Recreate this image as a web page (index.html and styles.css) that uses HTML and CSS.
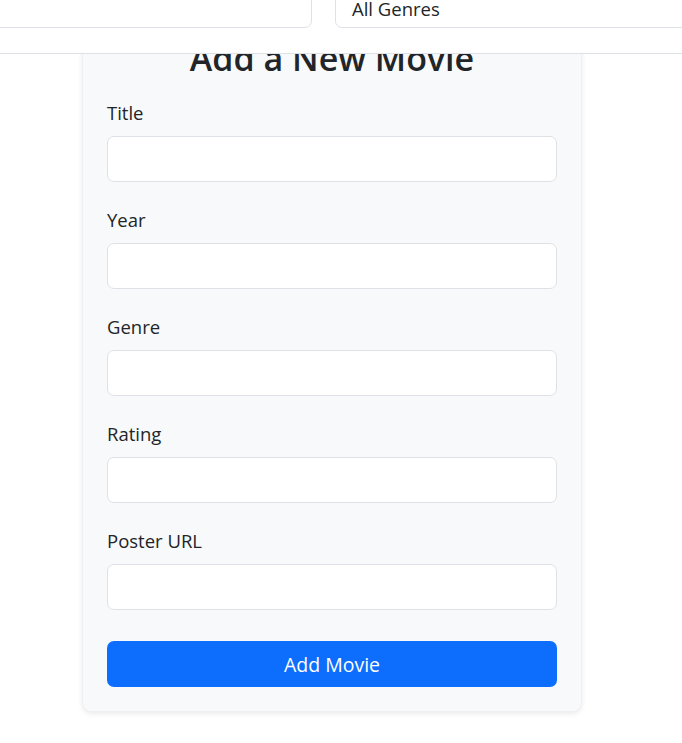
FILE: index.html
```html
<!DOCTYPE html>
<html lang="en">
<head>
<meta charset="utf-8">
<title>Add a New Movie</title>
<link rel="stylesheet" href="styles.css">
</head>
<body>
<header class="topbar">
  <div class="filters">
    <input class="field field-search" type="text" aria-label="Search">
    <div class="field field-select">All Genres</div>
  </div>
</header>
<main class="page">
  <section class="card">
    <h2 class="card-title">Add a New Movie</h2>
    <form class="movie-form">
      <div class="group">
        <label class="label">Title</label>
        <input class="field" type="text">
      </div>
      <div class="group">
        <label class="label">Year</label>
        <input class="field" type="text">
      </div>
      <div class="group">
        <label class="label">Genre</label>
        <input class="field" type="text">
      </div>
      <div class="group">
        <label class="label">Rating</label>
        <input class="field" type="text">
      </div>
      <div class="group">
        <label class="label">Poster URL</label>
        <input class="field" type="text">
      </div>
      <button class="btn-primary" type="button">Add Movie</button>
    </form>
  </section>
</main>
</body>
</html>
```

FILE: styles.css
```css
* { box-sizing: border-box; }

html, body {
  margin: 0;
  padding: 0;
  background: #ffffff;
  color: #212529;
  font-family: "Open Sans", "Noto Sans", sans-serif;
  font-size: 18.5px;
}

.topbar {
  position: fixed;
  top: 0;
  left: 0;
  right: 0;
  height: 54px;
  background: #ffffff;
  border-bottom: 1px solid #dee2e6;
  overflow: hidden;
  z-index: 10;
}

.filters {
  display: flex;
  gap: 23px;
  margin-left: -40px;
  margin-top: -18px;
}

.field {
  display: block;
  width: 100%;
  height: 46px;
  background: #ffffff;
  border: 1px solid #dee2e6;
  border-radius: 7px;
  font-family: inherit;
  font-size: 18.5px;
  color: #212529;
  padding: 0 16px;
  outline: none;
}

.field-search { flex: 0 0 352px; }

.field-select {
  flex: 0 0 420px;
  display: flex;
  align-items: center;
  padding-top: 6px;
}

.page {
  display: flex;
  justify-content: center;
  padding: 0 0 40px;
}

.card {
  width: 500px;
  margin-top: 18px;
  margin-right: 18px;
  background: #f8f9fa;
  border: 1px solid #eef0f2;
  border-radius: 9px;
  padding: 24px;
  box-shadow: 0 2px 5px rgba(0, 0, 0, 0.08);
}

.card-title {
  margin: 0 0 26px;
  text-align: center;
  font-size: 34px;
  font-weight: 600;
  line-height: 30px;
}

.movie-form {
  display: flex;
  flex-direction: column;
}

.group {
  display: flex;
  flex-direction: column;
  margin-bottom: 24px;
}

.label {
  line-height: 27px;
  margin-bottom: 10px;
}

.btn-primary {
  margin-top: 7px;
  height: 46px;
  border: none;
  border-radius: 7px;
  background: #0d6efd;
  color: #ffffff;
  font-family: inherit;
  font-size: 19.5px;
}
```
